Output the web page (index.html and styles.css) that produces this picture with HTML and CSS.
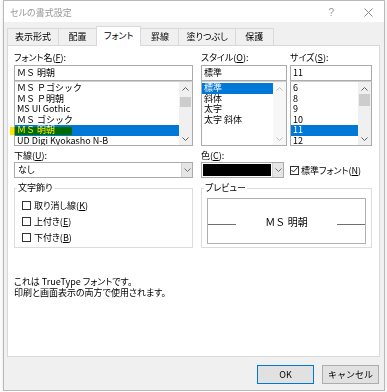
FILE: index.html
```html
<!DOCTYPE html>
<html lang="ja">
<head>
    <meta charset="UTF-8">
    <title>セルの書式設定</title>
    <link rel="stylesheet" href="styles.css">
</head>
<body>

    <div class="dialog">
        <div class="titlebar">
            <span class="title">セルの書式設定</span>
            <span class="help">?</span>
            <svg class="close" width="9" height="9" viewBox="0 0 9 9"><path d="M0.5 0.5 L8.5 8.5 M8.5 0.5 L0.5 8.5" stroke="#8a8a8a" stroke-width="1" fill="none"/></svg>
        </div>

        <div class="tabs">
            <span class="tab">表示形式</span>
            <span class="tab">配置</span>
            <span class="tab active">フォント</span>
            <span class="tab">罫線</span>
            <span class="tab">塗りつぶし</span>
            <span class="tab">保護</span>
        </div>

        <div class="panel">
            <div class="grid">
                <!-- font name -->
                <div class="field w-name">
                    <div class="label">フォント名(<u>F</u>):</div>
                    <div class="input">ＭＳ 明朝</div>
                    <div class="listbox">
                        <ul>
                            <li>ＭＳ Ｐゴシック</li>
                            <li>ＭＳ Ｐ明朝</li>
                            <li>MS UI Gothic</li>
                            <li>ＭＳ ゴシック</li>
                            <li class="sel">ＭＳ 明朝</li>
                            <li>UD Digi Kyokasho N-B</li>
                        </ul>
                        <div class="scrollbar">
                            <span class="arrow"><svg width="7" height="4"><polyline points="0.5,3.5 3.5,0.5 6.5,3.5" fill="none" stroke="#606060"/></svg></span>
                            <span class="thumb"></span>
                            <span class="track"></span>
                            <span class="arrow"><svg width="7" height="4"><polyline points="0.5,0.5 3.5,3.5 6.5,0.5" fill="none" stroke="#606060"/></svg></span>
                        </div>
                        <span class="marker"></span>
                    </div>
                </div>

                <!-- style -->
                <div class="field w-style">
                    <div class="label">スタイル(<u>O</u>):</div>
                    <div class="input">標準</div>
                    <div class="listbox">
                        <ul>
                            <li class="sel">標準</li>
                            <li>斜体</li>
                            <li>太字</li>
                            <li>太字 斜体</li>
                        </ul>
                        <div class="scrollbar off">
                            <span class="arrow"><svg width="7" height="4"><polyline points="0.5,3.5 3.5,0.5 6.5,3.5" fill="none" stroke="#c0c0c0"/></svg></span>
                            <span class="track"></span>
                            <span class="arrow"><svg width="7" height="4"><polyline points="0.5,0.5 3.5,3.5 6.5,0.5" fill="none" stroke="#c0c0c0"/></svg></span>
                        </div>
                    </div>
                </div>

                <!-- size -->
                <div class="field w-size">
                    <div class="label">サイズ(<u>S</u>):</div>
                    <div class="input">11</div>
                    <div class="listbox">
                        <ul>
                            <li>6</li>
                            <li>8</li>
                            <li>9</li>
                            <li>10</li>
                            <li class="sel">11</li>
                            <li>12</li>
                        </ul>
                        <div class="scrollbar">
                            <span class="arrow"><svg width="7" height="4"><polyline points="0.5,3.5 3.5,0.5 6.5,3.5" fill="none" stroke="#606060"/></svg></span>
                            <span class="thumb thumb-size"></span>
                            <span class="track"></span>
                            <span class="arrow"><svg width="7" height="4"><polyline points="0.5,0.5 3.5,3.5 6.5,0.5" fill="none" stroke="#606060"/></svg></span>
                        </div>
                    </div>
                </div>

                <!-- underline -->
                <div class="field w-name row2">
                    <div class="label">下線(<u>U</u>):</div>
                    <div class="select">
                        <span class="value">なし</span>
                        <span class="drop"><svg width="7" height="4"><polyline points="0.5,0.5 3.5,3.5 6.5,0.5" fill="none" stroke="#707070"/></svg></span>
                    </div>
                </div>

                <!-- color -->
                <div class="field w-color row2">
                    <div class="label">色(<u>C</u>):</div>
                    <div class="select">
                        <span class="swatch"></span>
                        <span class="drop"><svg width="7" height="4"><polyline points="0.5,0.5 3.5,3.5 6.5,0.5" fill="none" stroke="#707070"/></svg></span>
                    </div>
                </div>

                <div class="normal-font row2">
                    <span class="check on"><svg width="7" height="6"><polyline points="0.5,3 2.5,5 6.5,0.5" fill="none" stroke="#222" stroke-width="1"/></svg></span>
                    標準フォント(<u>N</u>)
                </div>

                <!-- effects -->
                <fieldset class="group w-name">
                    <legend>文字飾り</legend>
                    <div class="opt"><span class="check"></span>取り消し線(<u>K</u>)</div>
                    <div class="opt"><span class="check"></span>上付き(<u>E</u>)</div>
                    <div class="opt"><span class="check"></span>下付き(<u>B</u>)</div>
                </fieldset>

                <!-- preview -->
                <fieldset class="group preview">
                    <legend>プレビュー</legend>
                    <div class="sample">
                        <span class="baseline"></span>
                        <span class="sample-text">ＭＳ 明朝</span>
                        <span class="baseline"></span>
                    </div>
                </fieldset>
            </div>

            <p class="note">これは TrueType フォントです。<br>印刷と画面表示の両方で使用されます。</p>
        </div>

        <div class="buttons">
            <button class="btn default">OK</button>
            <button class="btn">キャンセル</button>
        </div>
    </div>

</body>
</html>
```

FILE: styles.css
```css
* { box-sizing: border-box; }
body { margin: 0; background: #fff; font-family: "Noto Sans CJK JP", sans-serif; font-size: 9px; color: #000; font-feature-settings: "palt"; }

.dialog { margin-left: 3px; width: 382px; height: 391px; border: 1px solid #b9b9b9; background: #f0f0f0; box-shadow: 0 0 4px rgba(0, 0, 0, 0.12); }

.titlebar { height: 21px; background: #fff; display: flex; align-items: center; padding: 2px 11px 0 6px; color: #999; }
.title { flex: 1; }
.help { font-size: 10px; margin-right: 30px; font-family: "Liberation Sans", sans-serif; }

.tabs { display: flex; align-items: flex-end; height: 23px; padding-left: 3px; }
.tab { height: 17px; line-height: 16px; min-width: 39px; padding: 0 7px; text-align: center; border: 1px solid #d9d9d9; border-bottom: none; margin-right: -1px; }
.tab.active { height: 20px; line-height: 18px; background: #fff; margin-bottom: -1px; position: relative; z-index: 1; }

.panel { margin: 0 4px 0 3px; height: 312px; background: #fff; border: 1px solid #d9d9d9; padding: 5px 6px 0; }

.grid { display: grid; grid-template-columns: 187px 89px 82px; }
.w-name { width: 179px; }
.w-style { width: 86px; }
.w-size { width: 82px; }
.w-color { width: 83px; }

.label { height: 13px; line-height: 13px; }
.input { height: 16px; margin-top: 1px; border: 1px solid #ababab; padding-left: 2px; line-height: 14px; font-size: 9px; font-feature-settings: normal; }

.listbox { position: relative; height: 65px; border: 1px solid #ababab; border-top-color: #d0d0d0; display: flex; }
.listbox ul { flex: 1; margin: 0; padding: 1px 0 0; list-style: none; line-height: 10.5px; font-feature-settings: normal; overflow: hidden; }
.listbox li { padding-left: 2px; white-space: nowrap; }
.listbox li.sel { background: #0078d7; color: #fff; }

.scrollbar { width: 13px; background: #f0f0f0; display: flex; flex-direction: column; }
.scrollbar.off { background: #f7f7f7; }
.arrow { height: 13px; display: flex; align-items: center; justify-content: center; }
.thumb { height: 10px; margin: 2px 1px 0; background: #cdcdcd; }
.thumb-size { margin-top: -1px; height: 12px; }
.track { flex: 1; }

/* highlighter stroke drawn over the selected font */
.marker { position: absolute; left: -5px; top: 45px; width: 62px; height: 8px; background: #ffe600; mix-blend-mode: multiply; }

.row2 .label { margin-top: 3px; }
.select { height: 16px; border: 1px solid #ababab; display: flex; }
.select .value { flex: 1; padding-left: 3px; line-height: 14px; }
.select .drop { width: 11px; background: #e5e5e5; border-left: 1px solid #d0d0d0; display: flex; align-items: center; justify-content: center; }
.swatch { flex: 1; margin: 1px; background: #000; }

.normal-font { display: flex; align-items: center; align-self: end; height: 16px; margin-top: 3px; }
.check { width: 9px; height: 9px; border: 1px solid #333; background: #fff; margin-right: 3px; display: flex; align-items: center; justify-content: center; }
.normal-font .check { margin-right: 2px; }

.group { margin: 4px 0 0; padding: 0 0 0 2px; height: 66px; border: 1px solid #dcdcdc; min-width: 0; }
.group legend { padding: 0 1px; line-height: 12px; }
.opt { display: flex; align-items: center; height: 16px; padding-left: 5px; }
.opt:first-of-type { margin-top: 3px; }

.preview { grid-column: 2 / 4; }
.sample { margin: 4px 0 0 3px; width: 159px; height: 46px; border: 1px solid #b0b0b0; display: flex; align-items: center; justify-content: space-between; }
.baseline { width: 28px; height: 1px; background: #707070; margin-top: 6px; }
.sample-text { font-family: "Liberation Serif", "Noto Sans CJK JP", serif; font-size: 10px; font-feature-settings: normal; }

.note { margin: 28px 0 0; line-height: 11px; }

.buttons { display: flex; justify-content: flex-end; gap: 8px; padding: 8px 5px 0 0; }
.btn { width: 57px; height: 19px; padding: 0; border: 1px solid #adadad; background: #e1e1e1; font-family: inherit; font-size: 9px; color: #000; }
.btn.default { border-color: #0078d7; }
```
